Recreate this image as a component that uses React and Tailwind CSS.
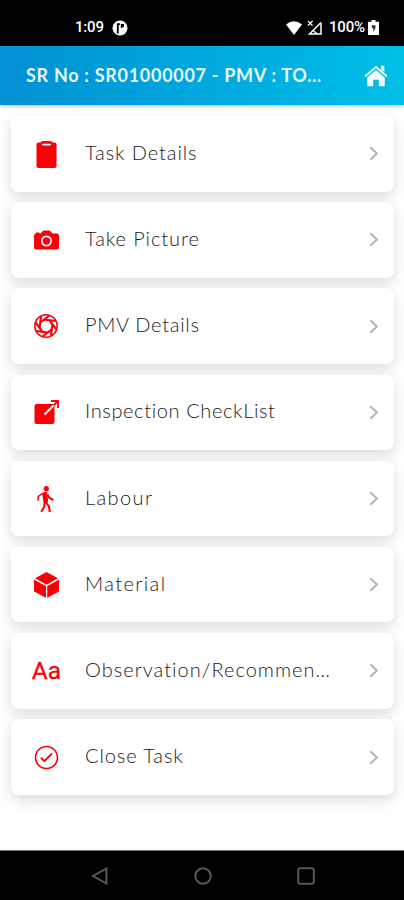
import React from "react";
import { IoIosCheckmarkCircleOutline } from "react-icons/io";

function ClipboardIcon() {
  return (
    <svg className="h-[30px] w-[30px]" viewBox="0 0 30 30" fill="currentColor">
      <path
        fillRule="evenodd"
        d="M7.500 3.500H9.500Q10 2 12 2h7q2 0 2.500 1.500H23.500q2 0 2 2V27q0 2-2 2h-16q-2 0-2-2V5.500q0-2 2-2zM12 4.800q-1 0-1 .8t1 .8h7q1 0 1-.8t-1-.8z"
      />
    </svg>
  );
}

function CameraIcon() {
  return (
    <svg className="h-[30px] w-[30px]" viewBox="0 0 30 30" fill="currentColor">
      <path d="M4.800 8.600V7.500h3.600v1h1.200L11.800 6q.5-.6 1.300-.6h4.800q.8 0 1.300.6l2.200 2.500h4.300q2.300 0 2.300 2.300v11.400q0 2.300-2.300 2.300H5.300Q3 24.500 3 22.200V10.800q0-2 1.800-2.200z" />
      <circle cx="15.500" cy="16" r="4.600" fill="none" stroke="#fff" strokeWidth="1.800" />
    </svg>
  );
}

function ApertureIcon() {
  return (
    <svg className="h-[30px] w-[30px]" viewBox="0 0 30 30" fill="none" stroke="currentColor">
      <circle cx="15" cy="15" r="11.200" strokeWidth="1.500" />
      <circle cx="15" cy="15" r="6.300" strokeWidth="1.500" />
      {[0, 45, 90, 135, 180, 225, 270, 315].map((angle) => (
        <path key={angle} d="M10.500 10.700L18.500 4.500" strokeWidth="2.100" transform={`rotate(${angle} 15 15)`} />
      ))}
    </svg>
  );
}

function OpenIcon() {
  return (
    <svg className="h-[30px] w-[30px]" viewBox="0 0 30 30">
      <rect x="3.500" y="7" width="20" height="20" rx="2" fill="currentColor" />
      <path d="M13.500 17.500L24 7" stroke="#fff" strokeWidth="2" />
      <path d="M22.500 8.500L26.500 4.500" stroke="currentColor" strokeWidth="1.800" />
      <path d="M20 4h7v7" fill="none" stroke="currentColor" strokeWidth="1.800" />
    </svg>
  );
}

function WalkIcon() {
  return (
    <svg className="h-[30px] w-[30px]" viewBox="0 0 30 30" fill="none" stroke="currentColor">
      <circle cx="15.300" cy="4.700" r="2.600" fill="currentColor" stroke="none" />
      <path d="M11 9q2-1.500 5-.8l1.300 10-4.800-.2z" fill="currentColor" stroke="none" />
      <path d="M11.500 9.500L7.300 12.500l-.4 4.200" strokeWidth="1.500" />
      <path d="M16.500 10.500l1.700 3.200 4.300 2.500" strokeWidth="2" />
      <path d="M14 17l4 5.500.8 5.500" strokeWidth="2.100" />
      <path d="M13.700 17.500l-.5 5.500-3 4.700" strokeWidth="2.100" />
    </svg>
  );
}

function CubeIcon() {
  return (
    <svg className="h-[30px] w-[30px]" viewBox="0 0 30 30" fill="currentColor">
      <path d="M15 2.300q.5-.2 1 0l10.900 6L15.500 14.700 4.100 8.300z" />
      <path d="M3 9.600L15 16.200v11.500L4 22.100q-1-.5-1-1.600z" />
      <path d="M28 9.600L16.200 16.200v11.500L27 22.100q1-.5 1-1.600z" />
    </svg>
  );
}

function TextIcon() {
  return (
    <span className="ml-[1px] font-['Roboto',sans-serif] text-[24.5px] leading-none [-webkit-text-stroke:0.3px_#fb0007]">
      Aa
    </span>
  );
}

function CheckIcon() {
  return <IoIosCheckmarkCircleOutline size={29} />;
}

const items = [
  { label: "Task Details", Icon: ClipboardIcon, spacing: "tracking-[0.9px]" },
  { label: "Take Picture", Icon: CameraIcon, spacing: "tracking-[0.92px]" },
  { label: "PMV Details", Icon: ApertureIcon, spacing: "tracking-[0.7px]" },
  { label: "Inspection CheckList", Icon: OpenIcon, spacing: "tracking-[0.62px]" },
  { label: "Labour", Icon: WalkIcon, spacing: "tracking-[1.4px]" },
  { label: "Material", Icon: CubeIcon, spacing: "tracking-[1.4px]" },
  { label: "Observation/Recommen…", Icon: TextIcon, spacing: "tracking-[1.02px]" },
  { label: "Close Task", Icon: CheckIcon, spacing: "tracking-[0.9px]" },
];

function StatusBar() {
  return (
    <div className="flex h-[46px] shrink-0 items-center bg-black pt-[9px] pr-[25px] pl-[75px] font-['Roboto',sans-serif] text-[15px] font-medium text-white">
      <span className="w-[30px] tracking-[-0.2px]">1:09</span>
      <svg className="ml-[7px] h-4 w-4" viewBox="0 0 16 16">
        <circle cx="8" cy="8" r="7.500" fill="#fff" />
        <path d="M5.800 13.500V4.200H8" fill="none" stroke="#000" strokeWidth="1.800" />
        <path d="M8.800 4h3.200v2.500L9.800 8H8.800z" fill="#000" />
      </svg>
      <div className="ml-auto flex items-center">
        <svg className="h-[14px] w-4" viewBox="0 0 16 14">
          <path d="M0 3.500Q8-3 16 3.500L8 14Z" fill="#fff" />
        </svg>
        <svg className="ml-[5px] h-[16px] w-[16px]" viewBox="0 0 16 16">
          <path d="M14 2.500V14H2.500L14 2.500M6.500 11l4 3" fill="none" stroke="#fff" strokeWidth="1.500" />
          <path d="M1 1l4.500 4.500M5.500 1L1 5.500" stroke="#fff" strokeWidth="1.200" />
        </svg>
        <span className="ml-[6px] w-[36px] whitespace-nowrap tracking-[-0.2px]">100%</span>
        <svg className="ml-[3px] h-[15px] w-[11px]" viewBox="0 0 11 15">
          <path d="M3.500 0h4v1.700H11V15H0V1.700h3.500z" fill="#fff" />
          <path d="M3.800 8V5.200h3.700V8L5.300 12V8.200z" fill="#333" />
        </svg>
      </div>
    </div>
  );
}

function Header() {
  return (
    <header className="relative flex h-[59px] shrink-0 items-center justify-between bg-linear-to-r from-[#0490d4] to-[#00bfe7] pr-[16px] pl-[26px] shadow-[0_1px_4px_rgba(0,0,0,0.3)]">
      <h1 className="pb-[1px] font-['Lato',sans-serif] text-[18px] font-bold whitespace-nowrap text-[#e6f7ff] tracking-[0.7px]">
        SR No : SR01000007 - PMV : TO…
      </h1>
      <svg className="mt-[1px] h-[24px] w-[24px]" viewBox="0 0 26 24" fill="#f2fbff">
        <path d="M1 12.500L13 2.200l12 10.300" fill="none" stroke="#f2fbff" strokeWidth="2" />
        <path d="M18.500 1h3.500v7L18.500 5z" />
        <path d="M3.500 13.600l9.500-8 9.500 8V22q0 1-1 1H16v-7h-6v7H4.500q-1 0-1-1z" />
      </svg>
    </header>
  );
}

function MenuCard({ label, Icon, spacing }) {
  return (
    <li className="flex h-[75.5px] items-center rounded-[8px] bg-white pr-[15px] pl-[20px] shadow-[0_5px_14px_rgba(0,0,0,0.14)]">
      <span className="flex w-[30px] shrink-0 justify-center text-[#fb0007]">
        <Icon />
      </span>
      <span
        className={`ml-[24px] flex-1 pb-[4px] font-['Lato',sans-serif] text-[20px] font-light whitespace-nowrap text-[#222] ${spacing}`}
      >
        {label}
      </span>
      <svg className="h-[15px] w-[10px]" viewBox="0 0 10 15" fill="none" stroke="#b4b4b4" strokeWidth="1.900">
        <path d="M1.300 1.200L8 7.500l-6.700 6.300" />
      </svg>
    </li>
  );
}

function NavBar() {
  return (
    <nav className="flex h-[50px] shrink-0 items-center justify-between border-t border-[#777] bg-black pr-[89px] pl-[91px]">
      <svg className="h-[18px] w-[18px]" viewBox="0 0 18 18" fill="none" stroke="#585858" strokeWidth="2">
        <path d="M15.500 1.500v15L2 9z" />
      </svg>
      <svg className="h-[18px] w-[18px]" viewBox="0 0 18 18" fill="none" stroke="#585858" strokeWidth="2">
        <circle cx="9" cy="9" r="7.700" />
      </svg>
      <svg className="h-[18px] w-[18px]" viewBox="0 0 18 18" fill="none" stroke="#585858" strokeWidth="2">
        <rect x="1.200" y="1.200" width="15.600" height="15.600" rx="2" />
      </svg>
    </nav>
  );
}

export default function App() {
  return (
    <div className="flex h-[900px] w-[404px] flex-col overflow-hidden bg-white">
      <StatusBar />
      <Header />
      <main className="min-h-0 flex-1 pt-[11px] pr-[10px] pl-[11px]">
        <ul className="flex flex-col gap-[10.7px]">
          {items.map((item) => (
            <MenuCard key={item.label} {...item} />
          ))}
        </ul>
      </main>
      <NavBar />
    </div>
  );
}
